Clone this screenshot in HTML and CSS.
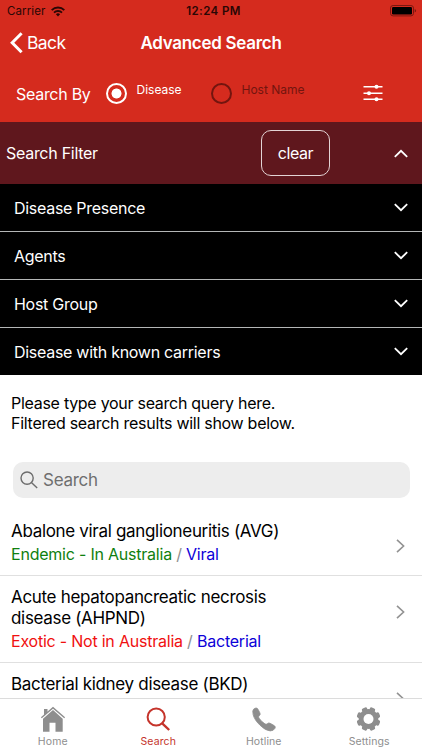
FILE: index.html
```html
<!DOCTYPE html>
<html lang="en">

<head>
  <meta charset="UTF-8">
  <meta name="viewport" content="width=device-width, initial-scale=1.0">
  <title>Advanced Search</title>
  <link rel="stylesheet" href="styles.css">
</head>

<body>
  <div class="app">

    <header class="header">
      <div class="status-bar">
        <div class="carrier">
          <span>Carrier</span>
          <svg class="wifi" width="14" height="11" viewBox="0 0 14 11" fill="none" stroke="#2a0705" stroke-width="1.9">
            <path d="M0.7 4.1a9 9 0 0 1 12.6 0" />
            <path d="M3 6.6a5.8 5.8 0 0 1 8 0" />
            <path d="M7 10.4L4.9 8.3a3.1 3.1 0 0 1 4.2 0z" fill="#2a0705" stroke="none" />
          </svg>
        </div>
        <span class="clock">12:24 PM</span>
        <svg class="battery" width="27" height="12" viewBox="0 0 27 12">
          <rect x="0.5" y="0.5" width="23" height="10.4" rx="2.6" fill="none" stroke="#7c1710" />
          <rect x="2" y="2" width="20" height="7.4" rx="1.2" fill="#000" />
          <path d="M24.7 4v3.6q1.4-.5 1.4-1.8t-1.4-1.8z" fill="#7c1710" />
        </svg>
      </div>

      <nav class="nav-bar">
        <div class="back">
          <svg width="13" height="22" viewBox="0 0 13 22" fill="none" stroke="#fff" stroke-width="3">
            <path d="M11.6 1.3L2.2 10.8l9.4 9.5" />
          </svg>
          <span class="back-text">Back</span>
        </div>
        <h1 class="title">Advanced Search</h1>
      </nav>

      <div class="search-by">
        <span class="search-by-text">Search By</span>
        <div class="radio selected">
          <span class="circle"></span>
          <span class="radio-text">Disease</span>
        </div>
        <div class="radio">
          <span class="circle"></span>
          <span class="radio-text">Host Name</span>
        </div>
        <svg class="sliders" width="20" height="18" viewBox="0 0 20 18" stroke="#fff" stroke-width="1.4" fill="#fff">
          <path d="M0.5 2.7h19M0.5 9.2h19M0.5 15.2h19" />
          <circle cx="13.5" cy="2.7" r="1.3" />
          <circle cx="6" cy="9.2" r="1.3" />
          <circle cx="13.5" cy="15.2" r="1.3" />
        </svg>
      </div>
    </header>

    <section class="filter-bar">
      <span class="filter-title">Search Filter</span>
      <button class="clear-btn">clear</button>
      <svg class="arrow" width="14" height="9" viewBox="0 0 14 9"><path d="M0.8 7.8L7 1.8l6.2 6" /></svg>
    </section>

    <ul class="filters">
      <li><span>Disease Presence</span><svg class="arrow" width="14" height="9" viewBox="0 0 14 9"><path d="M0.8 1.2L7 7.2l6.2-6" /></svg></li>
      <li><span>Agents</span><svg class="arrow" width="14" height="9" viewBox="0 0 14 9"><path d="M0.8 1.2L7 7.2l6.2-6" /></svg></li>
      <li><span>Host Group</span><svg class="arrow" width="14" height="9" viewBox="0 0 14 9"><path d="M0.8 1.2L7 7.2l6.2-6" /></svg></li>
      <li><span>Disease with known carriers</span><svg class="arrow" width="14" height="9" viewBox="0 0 14 9"><path d="M0.8 1.2L7 7.2l6.2-6" /></svg></li>
    </ul>

    <main class="content">
      <p class="hint">Please type your search query here.<br>Filtered search results will show below.</p>

      <div class="search-box">
        <svg width="18" height="18" viewBox="0 0 18 18" fill="none" stroke="#6d6d6d" stroke-width="1.4">
          <circle cx="7.1" cy="7.1" r="6.1" />
          <path d="M11.4 11.4l5.8 5.5" />
        </svg>
        <span>Search</span>
      </div>

      <div class="results">
        <div class="result">
          <div>
            <h2>Abalone viral ganglioneuritis (AVG)</h2>
            <p><span class="endemic">Endemic - In Australia</span> / <span class="agent">Viral</span></p>
          </div>
          <svg class="more" width="9" height="14" viewBox="0 0 9 14"><path d="M1 0.8L7.6 7 1 13.2" /></svg>
        </div>
        <div class="result">
          <div>
            <h2>Acute hepatopancreatic necrosis<br>disease (AHPND)</h2>
            <p><span class="exotic">Exotic - Not in Australia</span> / <span class="agent">Bacterial</span></p>
          </div>
          <svg class="more" width="9" height="14" viewBox="0 0 9 14"><path d="M1 0.8L7.6 7 1 13.2" /></svg>
        </div>
        <div class="result">
          <div>
            <h2>Bacterial kidney disease (BKD)</h2>
          </div>
          <svg class="more" width="9" height="14" viewBox="0 0 9 14"><path d="M1 0.8L7.6 7 1 13.2" /></svg>
        </div>
      </div>
    </main>

    <footer class="tabs">
      <div class="tab">
        <svg width="26" height="26" viewBox="0 0 26 26" fill="#8e8e8e">
          <path d="M4 3h3.5v3.2L4 9.4z" />
          <path d="M13 0.8L0.9 11.3l.9 1L13 2.7l11.2 9.6.9-1z" />
          <path d="M13 4L3 12.7v13h6.5v-9h6v9h7.2v-13z" />
        </svg>
        <span>Home</span>
      </div>
      <div class="tab active">
        <svg width="26" height="26" viewBox="0 0 26 26" fill="none" stroke="#c5342b" stroke-width="2">
          <circle cx="11.2" cy="11" r="8.6" />
          <path d="M17.2 17.3l7 6.7" stroke-width="2.4" />
        </svg>
        <span>Search</span>
      </div>
      <div class="tab">
        <svg width="26" height="26" viewBox="0 0 26 26" fill="#8e8e8e" stroke="#8e8e8e" stroke-width="0.8" stroke-linejoin="round">
          <path d="M1.8 5Q2.2 2.8 4.200 2.200q1.800-.6 2.800 1l1.900 3.700q.8 1.700-.7 2.900c-.8.7-.7 1.400-.1 2.400q2.300 3.600 5.800 5.600c1 .6 1.700.5 2.400-.1q1.200-1.200 2.800-.4l4.100 2.300q1.600 1 .8 2.700-1.400 2.600-4.800 2.600-4.500 0-10.200-5.700Q1.400 12.200 1.800 5z" />
        </svg>
        <span>Hotline</span>
      </div>
      <div class="tab">
        <svg width="26" height="26" viewBox="0 0 26 26">
          <g fill="#8e8e8e">
            <circle cx="12.5" cy="13" r="9.9" />
            <rect x="9.7" y="1.1" width="5.6" height="23.8" rx="1.6" transform="rotate(22.5 12.5 13)" />
            <rect x="9.7" y="1.1" width="5.6" height="23.8" rx="1.6" transform="rotate(67.5 12.5 13)" />
            <rect x="9.7" y="1.1" width="5.6" height="23.8" rx="1.6" transform="rotate(112.5 12.5 13)" />
            <rect x="9.7" y="1.1" width="5.6" height="23.8" rx="1.6" transform="rotate(157.5 12.5 13)" />
          </g>
          <circle cx="12.5" cy="13" r="5" fill="#fff" />
        </svg>
        <span>Settings</span>
      </div>
    </footer>

  </div>
</body>

</html>
```
FILE: styles.css
```css
* {
  margin: 0;
  padding: 0;
  box-sizing: border-box;
}

body {
  background-color: #fff;
  color: #000;
  font-family: Inter, "Liberation Sans", sans-serif;
  font-size: 16px;
  letter-spacing: -0.28px;
}

svg {
  display: block;
  flex-shrink: 0;
}

.app {
  width: 100%;
  height: 750px;
  display: flex;
  flex-direction: column;
  overflow: hidden;
  white-space: nowrap;
}

/* header */
.header {
  height: 122px;
  background: #d52b1e;
  color: #fff;
  flex-shrink: 0;
}

.status-bar {
  height: 22px;
  padding: 0 5px 0 7px;
  display: grid;
  grid-template-columns: 1fr auto 1fr;
  align-items: center;
  font-size: 11.5px;
  letter-spacing: 0.1px;
  color: #2a0705;
}

.carrier {
  display: flex;
  align-items: center;
  gap: 6px;
}

.clock {
  padding-left: 3px;
  font-weight: 600;
  letter-spacing: 0.4px;
}

.battery {
  justify-self: end;
}

.nav-bar {
  height: 42px;
  padding: 0 10px;
  display: grid;
  grid-template-columns: 1fr auto 1fr;
  align-items: center;
}

.back {
  display: flex;
  align-items: center;
  gap: 4px;
  font-size: 17.5px;
  letter-spacing: -0.6px;
}

.back-text {
  padding-bottom: 1px;
}

.title {
  font-size: 17px;
  font-weight: 600;
}

.search-by {
  height: 58px;
  padding: 0 39px 0 16px;
  display: flex;
  align-items: center;
}

.search-by-text {
  width: 89.5px;
  padding-top: 2px;
}

.radio {
  display: flex;
  width: 105px;
  gap: 10px;
  color: #73150f;
  font-size: 12px;
  letter-spacing: 0;
}

.radio-text {
  line-height: 14px;
}

.circle {
  width: 21px;
  height: 21px;
  border: 2px solid #73150f;
  border-radius: 50%;
  flex-shrink: 0;
}

.selected {
  color: #fff;
}

.selected .circle {
  border-color: #fff;
  background: radial-gradient(circle, #fff 4.7px, transparent 5.3px);
}

.sliders {
  margin-left: auto;
}

/* filters */
.filter-bar {
  height: 62px;
  padding: 0 14px 0 6px;
  display: flex;
  align-items: center;
  background: #5f171d;
  color: #fff;
  flex-shrink: 0;
}

.clear-btn {
  width: 69px;
  height: 46px;
  margin-left: auto;
  margin-right: 64px;
  border: 1px solid #e3d3d4;
  border-radius: 10px;
  background: none;
  color: #fff;
  font-family: inherit;
  font-size: 16px;
  letter-spacing: -0.4px;
}

.arrow {
  fill: none;
  stroke: #fff;
  stroke-width: 1.8;
}

.filters {
  height: 191px;
  background: #000;
  color: #fff;
  list-style: none;
  flex-shrink: 0;
}

.filters li {
  height: 48px;
  padding: 0 14px;
  display: flex;
  align-items: center;
  justify-content: space-between;
  border-bottom: 1px solid #b4b6b6;
}

.filters li:last-child {
  height: 47px;
  border-bottom: none;
}

.filters .arrow {
  margin-bottom: 1px;
}

/* search + results */
.content {
  flex: 1;
  min-height: 0;
  overflow: hidden;
  padding-top: 18px;
}

.hint {
  padding-left: 11px;
  line-height: 20.4px;
}

.search-box {
  height: 36px;
  margin: 28px 12px 0 13px;
  padding-left: 7px;
  display: flex;
  align-items: center;
  gap: 5px;
  border-radius: 10px;
  background: #ededed;
  color: #6f6f6f;
  font-size: 17px;
}

.results {
  margin-top: 12px;
}

.result {
  padding: 11px 17px 10.5px 11px;
  display: flex;
  align-items: flex-start;
  justify-content: space-between;
  border-bottom: 1px solid #e0e0e0;
}

.result h2 {
  font-size: 17px;
  font-weight: 400;
  line-height: 20.4px;
  letter-spacing: -0.32px;
}

.result p {
  margin-top: 2.5px;
  line-height: 21px;
  letter-spacing: -0.22px;
  color: #8e8e8e;
}

.result .endemic {
  color: #0f800f;
}

.result .exotic {
  color: #f01010;
}

.result .agent {
  color: #0c00d8;
}

.more {
  margin-top: 18px;
  fill: none;
  stroke: #929292;
  stroke-width: 1.6;
}

/* bottom tabs */
.tabs {
  height: 52px;
  display: grid;
  grid-template-columns: repeat(4, 1fr);
  border-top: 1px solid #dcdcdc;
  background: #fff;
  flex-shrink: 0;
}

.tab {
  padding-top: 7px;
  display: flex;
  flex-direction: column;
  align-items: center;
  gap: 3px;
  font-size: 10.5px;
  line-height: 13px;
  letter-spacing: 0.1px;
  color: #8e8e8e;
}

.active {
  color: #c5342b;
}
```
